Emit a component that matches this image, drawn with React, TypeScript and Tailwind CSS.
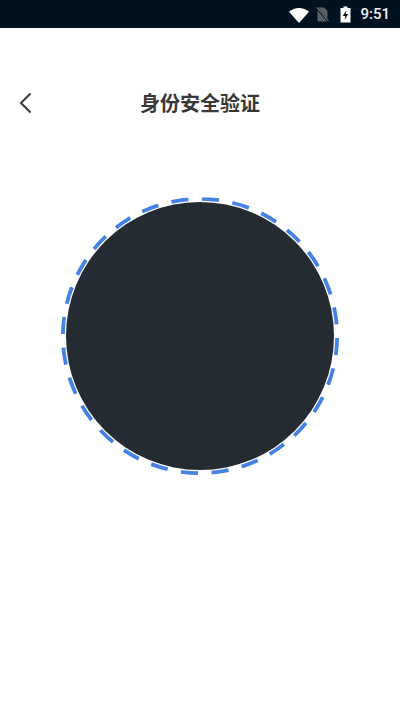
function StatusBar() {
  return (
    <div className="flex h-7 items-center justify-end bg-[#00111f] pr-[10px] text-white">
      <svg width="20" height="15" viewBox="0 0 20 15" className="mr-[7px] mt-[2px]">
        <path d="M0 3.8C2.8 1.4 6.2 0 10 0s7.2 1.4 10 3.8L10 15z" fill="#fff" />
      </svg>
      <svg width="13" height="15" viewBox="0 0 13 15" className="mr-[11px]">
        <path d="M1.5 0.5h6.5L11.5 4v10.5H1.5z" fill="#5b6268" />
        <path d="M0.4 0.6l12 13.8" stroke="#00111f" strokeWidth="2" />
        <path d="M0.6 0.4l12 13.8" stroke="#8b9196" strokeWidth="1" />
      </svg>
      <svg width="11" height="17" viewBox="0 0 11 17" className="mr-[9px]">
        <path d="M3.5 0.5h4v1.5h3v14.5h-10V2h3z" fill="#fff" />
        <path d="M6.4 4.2L2.8 10h2.5l-0.7 4 3.6-6h-2.5z" fill="#00111f" />
      </svg>
      <span className="font-['Roboto',sans-serif] text-[15px] font-medium leading-none text-[#eef0f2]">9:51</span>
    </div>
  );
}

export default function App() {
  return (
    <div className="h-[712px] w-[400px] bg-white font-['Noto_Sans_CJK_SC','Noto_Sans',sans-serif]">
      <StatusBar />
      <div className="relative mt-[47px] flex h-[56px] items-center justify-center">
        <svg width="14" height="22" viewBox="0 0 14 22" className="absolute left-[19px] top-[17px]" fill="none">
          <path d="M11.5 1.5L2 11l9.5 9.5" stroke="#333a40" strokeWidth="2" />
        </svg>
        <h1 className="text-[20px] font-bold leading-none text-[#383838]">身份安全验证</h1>
      </div>
      <div className="mt-[71px] flex justify-center">
        <div className="relative size-[268px] rounded-full bg-[#252b33]">
          <svg viewBox="0 0 280 280" className="absolute -left-[6px] -top-[6px] size-[280px]">
            <circle
              cx="140"
              cy="140"
              r="137.1"
              fill="none"
              stroke="#4682e4"
              strokeWidth="3.8"
              pathLength="360"
              strokeDasharray="7.2 5.657"
              transform="rotate(-89.2 140 140)"
            />
          </svg>
        </div>
      </div>
    </div>
  );
}
